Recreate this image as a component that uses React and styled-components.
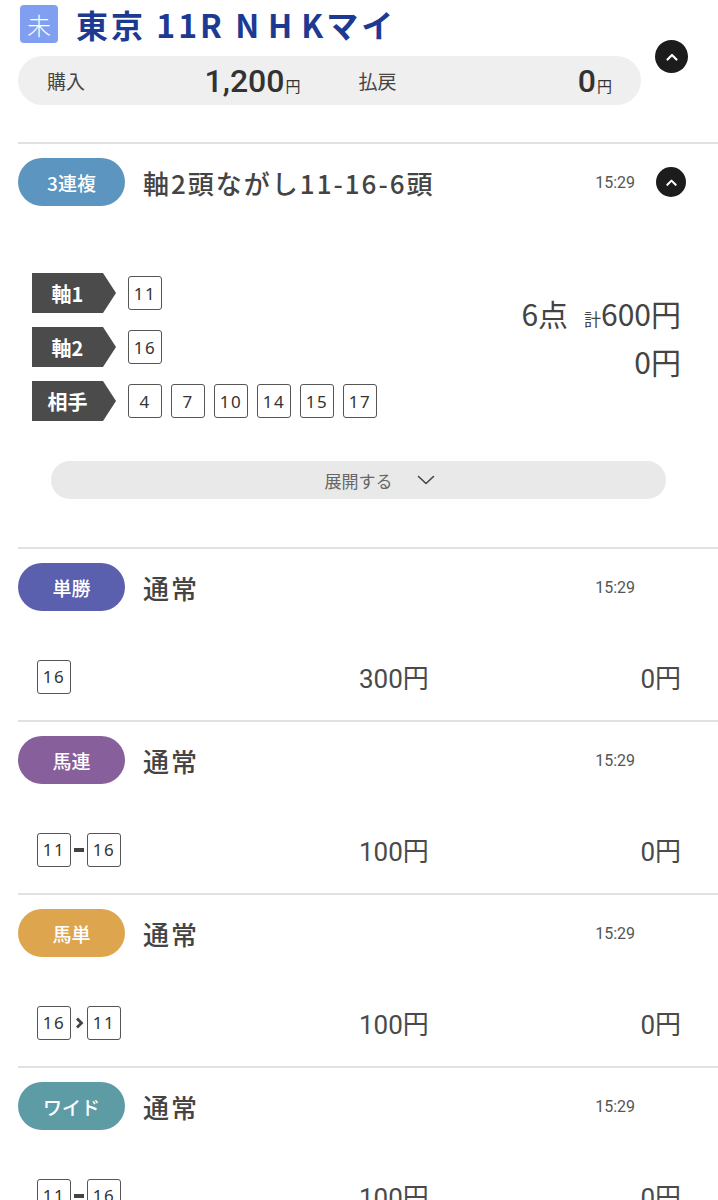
import React from "react";
import styled, { createGlobalStyle } from "styled-components";

const GlobalStyle = createGlobalStyle`
  body {
    margin: 0;
    background: #fff;
    font-family: "Noto Sans CJK JP", "Noto Sans", sans-serif;
    color: #444;
  }
`;

const Page = styled.div`
  width: 718px;
  padding-left: 18px;
  box-sizing: border-box;
  overflow: hidden;
`;

const Header = styled.header`
  display: flex;
  align-items: flex-start;
`;

const HeaderMain = styled.div`
  width: 623px;
  padding-top: 5px;
`;

const TitleRow = styled.div`
  display: flex;
  align-items: center;
  height: 38px;
`;

const StatusBadge = styled.span`
  width: 38px;
  height: 38px;
  margin-left: 2px;
  border-radius: 4px;
  background: #809ff0;
  color: #fff;
  font-size: 24px;
  font-weight: 300;
  display: flex;
  align-items: center;
  justify-content: center;
`;

const RaceTitle = styled.h1`
  margin: 0 0 0 18px;
  font-size: 32px;
  font-weight: 700;
  color: #1d3a93;
  letter-spacing: 3px;
  line-height: 38px;
  white-space: nowrap;
  span {
    letter-spacing: 9px;
  }
`;

const Summary = styled.div`
  margin-top: 13px;
  height: 49px;
  border-radius: 25px;
  background: #efefef;
  display: grid;
  grid-template-columns: 1fr 1fr;
`;

const SummaryCell = styled.div`
  display: flex;
  align-items: center;
  justify-content: space-between;
  padding: 0 29px;
`;

const SummaryLabel = styled.span`
  font-size: 19px;
  color: #444;
`;

const SummaryValue = styled.span`
  font-family: Roboto, "Noto Sans CJK JP", sans-serif;
  font-size: 32px;
  font-weight: 500;
  color: #333;
  small {
    font-family: "Noto Sans CJK JP", sans-serif;
    font-size: 15px;
    font-weight: 400;
    margin-left: 1px;
  }
`;

const CircleToggle = styled.span`
  width: ${(p) => p.size}px;
  height: ${(p) => p.size}px;
  border-radius: 50%;
  background: #1c1c1c;
  display: flex;
  align-items: center;
  justify-content: center;
  flex: none;
`;

const HeaderToggle = styled(CircleToggle)`
  margin: 40px 0 0 14px;
`;

const Section = styled.section`
  border-top: 2px solid #e1e1e1;
  margin-top: ${(p) => p.gap || 0}px;
`;

const SectionHead = styled.div`
  display: flex;
  align-items: center;
  padding: 14px 32px 0 0;
`;

const TypePill = styled.span`
  width: 107px;
  height: 48px;
  border-radius: 24px;
  background: ${(p) => p.color};
  color: #fff;
  font-size: 19px;
  font-weight: 500;
  display: flex;
  align-items: center;
  justify-content: center;
  flex: none;
`;

const BetTitle = styled.span`
  flex: 1;
  margin-left: 18px;
  font-size: 26px;
  font-weight: 500;
  letter-spacing: 2px;
  color: #444;
`;

const Time = styled.span`
  font-family: Roboto, sans-serif;
  font-size: 16px;
  color: #555;
  margin-right: 21px;
`;

const TogglePlaceholder = styled.span`
  width: 30px;
  flex: none;
`;

const FormationBody = styled.div`
  display: flex;
  justify-content: space-between;
  align-items: flex-start;
  margin-top: 67px;
  padding: 0 37px 0 14px;
`;

const AxisList = styled.div`
  display: flex;
  flex-direction: column;
  gap: 14px;
`;

const AxisRow = styled.div`
  display: flex;
  align-items: center;
  gap: 12px;
`;

const AxisTag = styled.span`
  width: 84px;
  height: 40px;
  padding-right: 13px;
  box-sizing: border-box;
  background: #4b4b4b;
  color: #fff;
  font-size: 20px;
  font-weight: 700;
  display: flex;
  align-items: center;
  justify-content: center;
  clip-path: polygon(0 0, 71px 0, 84px 50%, 71px 100%, 0 100%);
`;

const NumberGroup = styled.div`
  display: flex;
  align-items: center;
  gap: ${(p) => p.gap || 9}px;
`;

const HorseNo = styled.span`
  width: 34px;
  height: 34px;
  box-sizing: border-box;
  border: 1.5px solid #555;
  border-radius: 3px;
  font-family: "Noto Sans", sans-serif;
  font-size: 17px;
  font-weight: 400;
  color: #333;
  letter-spacing: 1.5px;
  display: flex;
  align-items: center;
  justify-content: center;
`;

const Totals = styled.div`
  margin-top: 16px;
  text-align: right;
  font-size: 30px;
  font-weight: 400;
  color: #444;
  line-height: 48px;
  small {
    font-size: 17px;
    line-height: 1;
    margin-left: 16px;
  }
`;

const ExpandButton = styled.div`
  margin: 40px 52px 48px 33px;
  height: 38px;
  border-radius: 19px;
  background: #e9e9e9;
  display: grid;
  grid-template-columns: 1fr auto 1fr;
  align-items: center;
  font-size: 17px;
  color: #666;
  svg {
    margin-left: 24px;
  }
`;

const BetRow = styled.div`
  display: grid;
  grid-template-columns: 1fr 1fr;
  align-items: center;
  height: 35px;
  margin-top: 47px;
  padding: 0 37px 27px 19px;
`;

const Amounts = styled.div`
  display: flex;
  justify-content: space-between;
  font-size: 26px;
  font-weight: 400;
  color: #4a4a4a;
  font-family: Roboto, "Noto Sans CJK JP", sans-serif;
`;

const Joiner = styled.span`
  display: flex;
  width: 10px;
  justify-content: center;
`;

const ChevronUp = ({ size = 14 }) => (
  <svg width={size} height={size} viewBox="0 0 14 14" fill="none">
    <path d="M2.5 9.5 7 5l4.5 4.5" stroke="#fff" strokeWidth="2.2" strokeLinecap="round" strokeLinejoin="round" />
  </svg>
);

const ChevronDown = () => (
  <svg width="18" height="12" viewBox="0 0 18 12" fill="none">
    <path d="M1.5 2.5 9 9.5l7.5-7" stroke="#444" strokeWidth="1.6" strokeLinecap="round" strokeLinejoin="round" />
  </svg>
);

const Dash = () => (
  <Joiner>
    <svg width="10" height="4" viewBox="0 0 10 4">
      <rect width="10" height="4" fill="#444" />
    </svg>
  </Joiner>
);

const Arrow = () => (
  <Joiner>
    <svg width="9" height="12" viewBox="0 0 9 12" fill="none">
      <path d="M2 1.5 6.5 6 2 10.5" stroke="#444" strokeWidth="2.8" />
    </svg>
  </Joiner>
);

const simpleBets = [
  { type: "単勝", color: "#5a5fae", nums: ["16"], amount: "300円" },
  { type: "馬連", color: "#875f9b", nums: ["11", "16"], join: "dash", amount: "100円" },
  { type: "馬単", color: "#dea54f", nums: ["16", "11"], join: "arrow", amount: "100円" },
  { type: "ワイド", color: "#5d9ba5", nums: ["11", "16"], join: "dash", amount: "100円" },
];

const axes = [
  { label: "軸1", nums: ["11"] },
  { label: "軸2", nums: ["16"] },
  { label: "相手", nums: ["4", "7", "10", "14", "15", "17"] },
];

export default function App() {
  return (
    <Page>
      <GlobalStyle />
      <Header>
        <HeaderMain>
          <TitleRow>
            <StatusBadge>未</StatusBadge>
            <RaceTitle>
              東京 11R <span>NH</span>Kマイ
            </RaceTitle>
          </TitleRow>
          <Summary>
            <SummaryCell>
              <SummaryLabel>購入</SummaryLabel>
              <SummaryValue>
                1,200<small>円</small>
              </SummaryValue>
            </SummaryCell>
            <SummaryCell>
              <SummaryLabel>払戻</SummaryLabel>
              <SummaryValue>
                0<small>円</small>
              </SummaryValue>
            </SummaryCell>
          </Summary>
        </HeaderMain>
        <HeaderToggle size={33}>
          <ChevronUp />
        </HeaderToggle>
      </Header>

      <Section gap={37}>
        <SectionHead>
          <TypePill color="#5c95bf">3連複</TypePill>
          <BetTitle>軸2頭ながし11-16-6頭</BetTitle>
          <Time>15:29</Time>
          <CircleToggle size={30}>
            <ChevronUp size={13} />
          </CircleToggle>
        </SectionHead>
        <FormationBody>
          <AxisList>
            {axes.map((a) => (
              <AxisRow key={a.label}>
                <AxisTag>{a.label}</AxisTag>
                <NumberGroup>
                  {a.nums.map((n) => (
                    <HorseNo key={n}>{n}</HorseNo>
                  ))}
                </NumberGroup>
              </AxisRow>
            ))}
          </AxisList>
          <Totals>
            <div>
              6点<small>計</small>600円
            </div>
            <div>0円</div>
          </Totals>
        </FormationBody>
        <ExpandButton>
          <span />
          <span>展開する</span>
          <ChevronDown />
        </ExpandButton>
      </Section>

      {simpleBets.map((b) => (
        <Section key={b.type}>
          <SectionHead>
            <TypePill color={b.color}>{b.type}</TypePill>
            <BetTitle>通常</BetTitle>
            <Time>15:29</Time>
            <TogglePlaceholder />
          </SectionHead>
          <BetRow>
            <NumberGroup gap={3}>
              {b.nums.map((n, i) => (
                <React.Fragment key={n}>
                  {i > 0 && (b.join === "arrow" ? <Arrow /> : <Dash />)}
                  <HorseNo>{n}</HorseNo>
                </React.Fragment>
              ))}
            </NumberGroup>
            <Amounts>
              <span>{b.amount}</span>
              <span>0円</span>
            </Amounts>
          </BetRow>
        </Section>
      ))}
    </Page>
  );
}
